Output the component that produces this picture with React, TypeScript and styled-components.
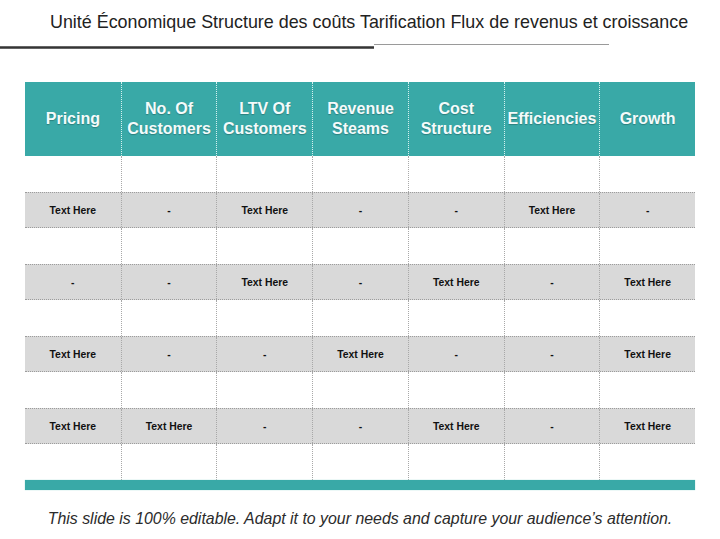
import React from "react";
import styled, { createGlobalStyle } from "styled-components";

const Global = createGlobalStyle`
  html, body { margin: 0; padding: 0; background: #ffffff; }
  body { font-family: "Liberation Sans", Arial, sans-serif; }
`;

const Page = styled.div`
  width: 720px;
  height: 539px;
  display: flex;
  flex-direction: column;
  overflow: hidden;
  background: #fff;
`;

const Title = styled.h1`
  margin: 12px 0 0 50px;
  font-size: 17.9px;
  line-height: 20px;
  font-weight: normal;
  color: #222;
  white-space: nowrap;
`;

const Rule = styled.div`
  display: flex;
  align-items: flex-start;
  margin-top: 12px;
  height: 5px;
`;

const ThickRule = styled.div`
  width: 374px;
  height: 3px;
  margin-top: 2px;
  background: linear-gradient(#8a8a8a, #333 40%, #3a3a3a 70%, #999);
`;

const ThinRule = styled.div`
  width: 235px;
  height: 1px;
  background: #9a9a9a;
`;

const Table = styled.div`
  margin: 33px 0 0 25px;
  width: 670px;
  display: flex;
  flex-direction: column;
`;

const HeaderRow = styled.div`
  display: grid;
  grid-template-columns: repeat(7, 1fr);
  height: 74px;
  background: #39a9a7;
`;

const HeaderCell = styled.div<{ $first?: boolean }>`
  display: flex;
  align-items: center;
  justify-content: center;
  text-align: center;
  color: #f4fbfb;
  font-weight: bold;
  font-size: 16px;
  line-height: 20px;
  text-shadow: 0 1px 1px rgba(0, 0, 0, 0.25);
  border-left: ${(p) => (p.$first ? "none" : "1px dotted #d6f1f0")};
`;

const BodyRow = styled.div<{ $shade: boolean }>`
  display: grid;
  grid-template-columns: repeat(7, 1fr);
  height: 36px;
  box-sizing: border-box;
  background: ${(p) => (p.$shade ? "#d9d9d9" : "#ffffff")};
  border-top: ${(p) => (p.$shade ? "1px dotted #9c9c9c" : "none")};
  border-bottom: ${(p) => (p.$shade ? "1px dotted #9c9c9c" : "none")};
`;

const Cell = styled.div<{ $first?: boolean }>`
  display: flex;
  align-items: center;
  justify-content: center;
  font-size: 10.4px;
  font-weight: bold;
  color: #111;
  border-left: ${(p) => (p.$first ? "none" : "1px dotted #a8a8a8")};
`;

const BottomBar = styled.div`
  height: 10px;
  background: #39a9a7;
  box-shadow: 0 0 1px #8fd3d1;
`;

const Footer = styled.p`
  margin: 20px 0 0 0;
  text-align: center;
  font-style: italic;
  font-size: 15.9px;
  line-height: 18px;
  color: #2b2b2b;
  white-space: nowrap;
`;

const headers: React.ReactNode[] = [
  "Pricing",
  <>No. Of<br />Customers</>,
  <>LTV Of<br />Customers</>,
  <>Revenue<br />Steams</>,
  <>Cost<br />Structure</>,
  "Efficiencies",
  "Growth",
];

const T = "Text Here";
const D = "-";
const E = "";
const empty = [E, E, E, E, E, E, E];

const rows: string[][] = [
  empty,
  [T, D, T, D, D, T, D],
  empty,
  [D, D, T, D, T, D, T],
  empty,
  [T, D, D, T, D, D, T],
  empty,
  [T, T, D, D, T, D, T],
  empty,
];

export default function App() {
  return (
    <Page>
      <Global />
      <Title>Unité Économique Structure des coûts Tarification Flux de revenus et croissance</Title>
      <Rule>
        <ThickRule />
        <ThinRule />
      </Rule>
      <Table>
        <HeaderRow>
          {headers.map((h, i) => (
            <HeaderCell key={i} $first={i === 0}>
              <span>{h}</span>
            </HeaderCell>
          ))}
        </HeaderRow>
        {rows.map((r, ri) => (
          <BodyRow key={ri} $shade={ri % 2 === 1}>
            {r.map((c, ci) => (
              <Cell key={ci} $first={ci === 0}>
                {c}
              </Cell>
            ))}
          </BodyRow>
        ))}
        <BottomBar />
      </Table>
      <Footer>This slide is 100% editable. Adapt it to your needs and capture your audience’s attention.</Footer>
    </Page>
  );
}
